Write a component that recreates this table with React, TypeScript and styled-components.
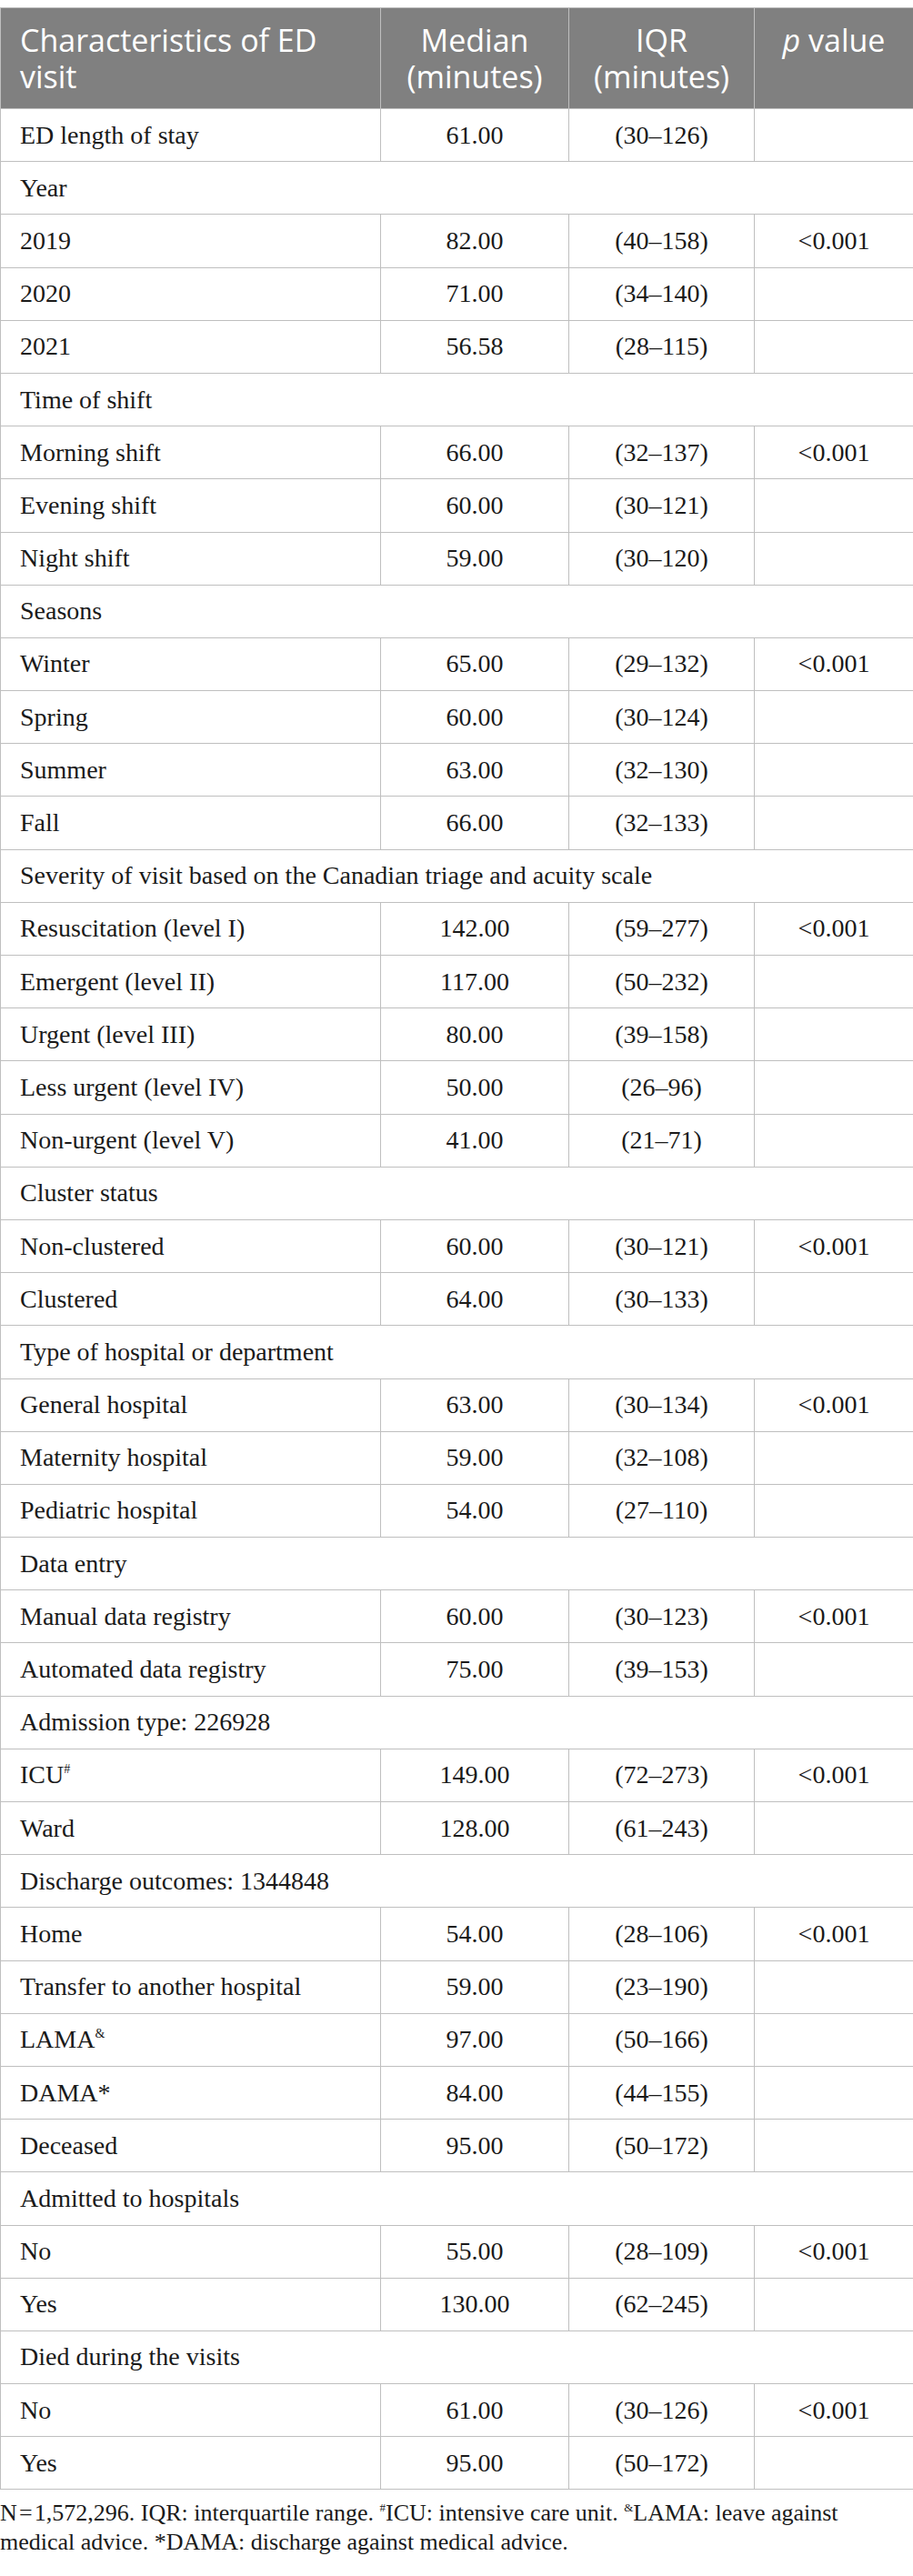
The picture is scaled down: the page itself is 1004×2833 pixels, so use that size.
import React from "react";
import styled, { createGlobalStyle } from "styled-components";

const GlobalStyle = createGlobalStyle`
  html, body {
    margin: 0;
    padding: 0;
    background: #ffffff;
  }
`;

const Page = styled.div`
  width: 1004px;
  padding-top: 8px;
  box-sizing: border-box;
`;

const Table = styled.table`
  width: 1004px;
  border-collapse: collapse;
  table-layout: fixed;
  font-family: "Liberation Serif", "Times New Roman", serif;
  color: #1a1a1a;
`;

const HeadCell = styled.th<{ $align?: "left" | "center" }>`
  background: #808080;
  color: #ffffff;
  font-family: "Open Sans", "Noto Sans", sans-serif;
  font-weight: 400;
  font-size: 34px;
  line-height: 40px;
  text-align: ${(p) => p.$align ?? "center"};
  vertical-align: top;
  padding: 15px 8px 15px ${(p) => (p.$align === "left" ? "21px" : "8px")};
  border: 1px solid #bfbfbf;
`;

const Row = styled.tr`
  height: 58.2px;
`;

const Cell = styled.td<{ $align?: "left" | "center" }>`
  font-size: 28px;
  line-height: 32px;
  padding: 0 8px 0 ${(p) => (p.$align === "left" ? "21px" : "8px")};
  text-align: ${(p) => p.$align ?? "center"};
  vertical-align: middle;
  border: 1px solid #bfbfbf;
  white-space: nowrap;
`;

const Italic = styled.i`
  font-style: italic;
`;

const Sup = styled.sup`
  font-size: 0.5em;
  line-height: 0;
  vertical-align: 0.8em;
`;

const Footnote = styled.p`
  margin: 10px 0 0;
  font-family: "Liberation Serif", "Times New Roman", serif;
  font-size: 26px;
  line-height: 32px;
  color: #1a1a1a;
  width: 1000px;
`;

type DataRow = {
  kind: "data";
  label: React.ReactNode;
  median: string;
  iqr: string;
  p?: string;
};
type GroupRow = { kind: "group"; label: string };

const rows: (DataRow | GroupRow)[] = [
  { kind: "data", label: "ED length of stay", median: "61.00", iqr: "(30–126)" },
  { kind: "group", label: "Year" },
  { kind: "data", label: "2019", median: "82.00", iqr: "(40–158)", p: "<0.001" },
  { kind: "data", label: "2020", median: "71.00", iqr: "(34–140)" },
  { kind: "data", label: "2021", median: "56.58", iqr: "(28–115)" },
  { kind: "group", label: "Time of shift" },
  { kind: "data", label: "Morning shift", median: "66.00", iqr: "(32–137)", p: "<0.001" },
  { kind: "data", label: "Evening shift", median: "60.00", iqr: "(30–121)" },
  { kind: "data", label: "Night shift", median: "59.00", iqr: "(30–120)" },
  { kind: "group", label: "Seasons" },
  { kind: "data", label: "Winter", median: "65.00", iqr: "(29–132)", p: "<0.001" },
  { kind: "data", label: "Spring", median: "60.00", iqr: "(30–124)" },
  { kind: "data", label: "Summer", median: "63.00", iqr: "(32–130)" },
  { kind: "data", label: "Fall", median: "66.00", iqr: "(32–133)" },
  { kind: "group", label: "Severity of visit based on the Canadian triage and acuity scale" },
  { kind: "data", label: "Resuscitation (level I)", median: "142.00", iqr: "(59–277)", p: "<0.001" },
  { kind: "data", label: "Emergent (level II)", median: "117.00", iqr: "(50–232)" },
  { kind: "data", label: "Urgent (level III)", median: "80.00", iqr: "(39–158)" },
  { kind: "data", label: "Less urgent (level IV)", median: "50.00", iqr: "(26–96)" },
  { kind: "data", label: "Non-urgent (level V)", median: "41.00", iqr: "(21–71)" },
  { kind: "group", label: "Cluster status" },
  { kind: "data", label: "Non-clustered", median: "60.00", iqr: "(30–121)", p: "<0.001" },
  { kind: "data", label: "Clustered", median: "64.00", iqr: "(30–133)" },
  { kind: "group", label: "Type of hospital or department" },
  { kind: "data", label: "General hospital", median: "63.00", iqr: "(30–134)", p: "<0.001" },
  { kind: "data", label: "Maternity hospital", median: "59.00", iqr: "(32–108)" },
  { kind: "data", label: "Pediatric hospital", median: "54.00", iqr: "(27–110)" },
  { kind: "group", label: "Data entry" },
  { kind: "data", label: "Manual data registry", median: "60.00", iqr: "(30–123)", p: "<0.001" },
  { kind: "data", label: "Automated data registry", median: "75.00", iqr: "(39–153)" },
  { kind: "group", label: "Admission type: 226928" },
  { kind: "data", label: <>ICU<Sup>#</Sup></>, median: "149.00", iqr: "(72–273)", p: "<0.001" },
  { kind: "data", label: "Ward", median: "128.00", iqr: "(61–243)" },
  { kind: "group", label: "Discharge outcomes: 1344848" },
  { kind: "data", label: "Home", median: "54.00", iqr: "(28–106)", p: "<0.001" },
  { kind: "data", label: "Transfer to another hospital", median: "59.00", iqr: "(23–190)" },
  { kind: "data", label: <>LAMA<Sup>&amp;</Sup></>, median: "97.00", iqr: "(50–166)" },
  { kind: "data", label: <>DAMA*</>, median: "84.00", iqr: "(44–155)" },
  { kind: "data", label: "Deceased", median: "95.00", iqr: "(50–172)" },
  { kind: "group", label: "Admitted to hospitals" },
  { kind: "data", label: "No", median: "55.00", iqr: "(28–109)", p: "<0.001" },
  { kind: "data", label: "Yes", median: "130.00", iqr: "(62–245)" },
  { kind: "group", label: "Died during the visits" },
  { kind: "data", label: "No", median: "61.00", iqr: "(30–126)", p: "<0.001" },
  { kind: "data", label: "Yes", median: "95.00", iqr: "(50–172)" },
];

export default function App() {
  return (
    <Page>
      <GlobalStyle />
      <Table>
        <colgroup>
          <col style={{ width: 418 }} />
          <col style={{ width: 207 }} />
          <col style={{ width: 204 }} />
          <col style={{ width: 175 }} />
        </colgroup>
        <thead>
          <tr>
            <HeadCell $align="left">Characteristics of ED visit</HeadCell>
            <HeadCell>Median (minutes)</HeadCell>
            <HeadCell>IQR (minutes)</HeadCell>
            <HeadCell>
              <Italic>p</Italic> value
            </HeadCell>
          </tr>
        </thead>
        <tbody>
          {rows.map((r, i) =>
            r.kind === "group" ? (
              <Row key={i}>
                <Cell $align="left" colSpan={4}>
                  {r.label}
                </Cell>
              </Row>
            ) : (
              <Row key={i}>
                <Cell $align="left">{r.label}</Cell>
                <Cell>{r.median}</Cell>
                <Cell>{r.iqr}</Cell>
                <Cell>{r.p ?? ""}</Cell>
              </Row>
            )
          )}
        </tbody>
      </Table>
      <Footnote>
        N&#8202;=&#8202;1,572,296. IQR: interquartile range. <Sup>#</Sup>ICU: intensive care unit.{" "}
        <Sup>&amp;</Sup>LAMA: leave against medical advice. *DAMA: discharge against medical advice.
      </Footnote>
    </Page>
  );
}
